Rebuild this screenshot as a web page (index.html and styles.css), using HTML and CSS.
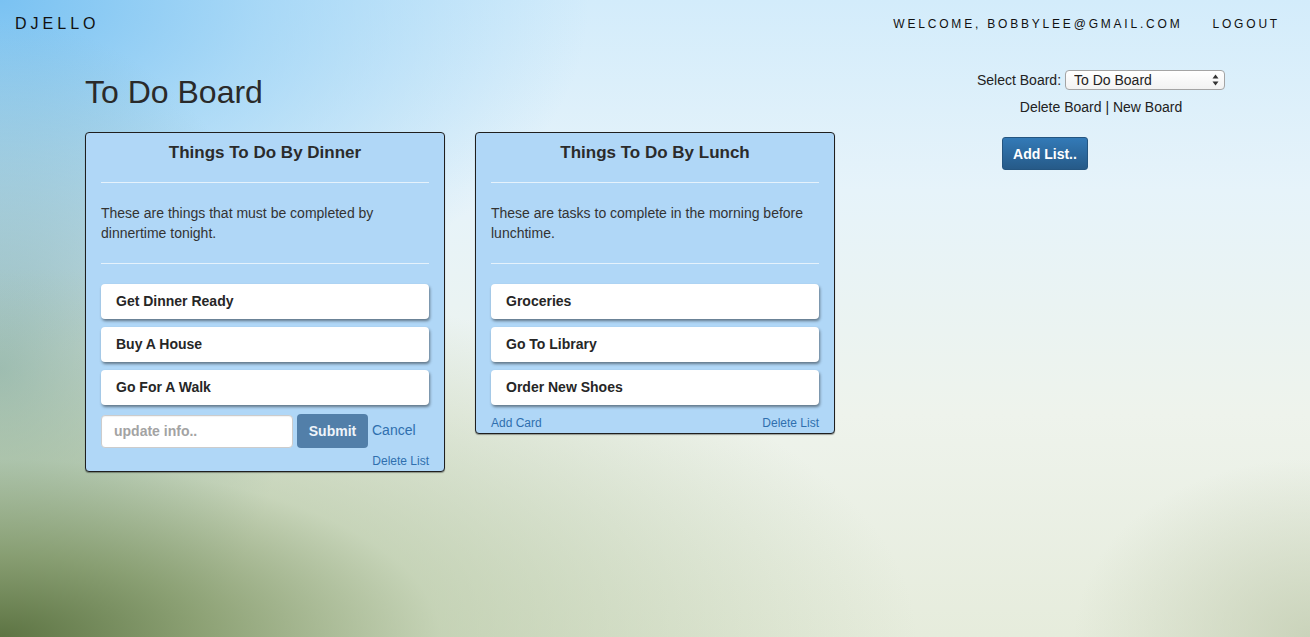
FILE: index.html
```html
<!DOCTYPE html>
<html lang="en">
<head>
<meta charset="utf-8">
<title>Djello</title>
<link rel="stylesheet" href="styles.css">
</head>
<body>
<nav class="topbar">
  <div class="brand">DJELLO</div>
  <ul class="navlinks">
    <li class="navlink">WELCOME, BOBBYLEE@GMAIL.COM</li>
    <li class="navlink">LOGOUT</li>
  </ul>
</nav>
<main class="page">
  <section class="board">
    <h1 class="board-title">To Do Board</h1>
    <div class="lists">
      <div class="list">
        <h3 class="list-title">Things To Do By Dinner</h3>
        <hr class="divider">
        <p class="list-desc">These are things that must be completed by dinnertime tonight.</p>
        <hr class="divider">
        <div class="cards">
          <div class="card">Get Dinner Ready</div>
          <div class="card">Buy A House</div>
          <div class="card">Go For A Walk</div>
        </div>
        <form class="card-form">
          <input class="card-input" type="text" placeholder="update info..">
          <button class="btn-submit" type="button">Submit</button>
          <a class="link cancel">Cancel</a>
        </form>
        <div class="list-footer end">
          <a class="link small">Delete List</a>
        </div>
      </div>
      <div class="list">
        <h3 class="list-title">Things To Do By Lunch</h3>
        <hr class="divider">
        <p class="list-desc">These are tasks to complete in the morning before lunchtime.</p>
        <hr class="divider">
        <div class="cards">
          <div class="card">Groceries</div>
          <div class="card">Go To Library</div>
          <div class="card">Order New Shoes</div>
        </div>
        <div class="list-footer between">
          <a class="link small">Add Card</a>
          <a class="link small">Delete List</a>
        </div>
      </div>
    </div>
  </section>
  <aside class="controls">
    <div class="select-row">
      <label class="select-label">Select Board:</label>
      <div class="select-wrap">
        <select class="board-select"><option>To Do Board</option></select>
        <svg class="select-arrows" width="7" height="12" viewBox="0 0 7 12"><path d="M3.5 0.5 L6.5 4.5 L0.5 4.5 Z" fill="#333"/><path d="M3.5 11.5 L6.5 7.5 L0.5 7.5 Z" fill="#333"/></svg>
      </div>
    </div>
    <div class="board-actions"><a class="plain">Delete Board</a> | <a class="plain">New Board</a></div>
    <button class="btn-primary" type="button">Add List..</button>
  </aside>
</main>
</body>
</html>
```

FILE: styles.css
```css
* { box-sizing: border-box; }
html, body { height: 100%; }
body {
  margin: 0;
  font-family: "Liberation Sans", Arial, Helvetica, sans-serif;
  font-size: 14px;
  line-height: 20px;
  color: #333;
  min-height: 637px;
  background:
    radial-gradient(ellipse 70% 58% at 0% 100%, rgba(93,116,67,1) 0%, rgba(125,148,98,0.85) 22%, rgba(170,190,150,0.55) 48%, rgba(215,225,205,0) 100%),
    radial-gradient(ellipse 22% 55% at 0% 58%, rgba(125,170,170,0.75) 0%, rgba(150,190,190,0) 100%),
    radial-gradient(ellipse 45% 55% at 0% 0%, rgba(122,194,242,1) 0%, rgba(150,208,245,0.7) 45%, rgba(190,225,248,0) 100%),
    radial-gradient(ellipse 18% 28% at 100% 100%, rgba(195,205,178,0.8) 0%, rgba(210,220,195,0) 100%),
    linear-gradient(to bottom, #d3ecfb 0%, #e6f3fa 30%, #eef3ec 65%, #e6ecdc 100%);
  overflow: hidden;
}

.topbar {
  height: 50px;
  display: flex;
  align-items: center;
  justify-content: space-between;
  padding: 0 15px 2px 15px;
}
.brand {
  font-size: 16px;
  letter-spacing: 4px;
  color: #111;
}
.navlinks {
  list-style: none;
  margin: 0;
  padding: 0;
  display: flex;
}
.navlink {
  font-size: 12px;
  letter-spacing: 2.8px;
  color: #111;
  padding: 0 15px 0 15px;
}
.navlink:last-child { padding-right: 15px; }

.page {
  display: flex;
  align-items: flex-start;
}
.board {
  padding-left: 85px;
  padding-top: 25px;
}
.board-title {
  margin: 0 0 22px 0;
  font-size: 32px;
  line-height: 35px;
  font-weight: normal;
  color: #2a2a2a;
}
.lists {
  display: flex;
  align-items: flex-start;
  gap: 30px;
}
.list {
  width: 360px;
  background: #b0d7f7;
  border: 1px solid #1f1f1f;
  border-radius: 4px;
  padding: 0 15px 1px;
  box-shadow: 0 1px 1px rgba(0,0,0,0.35);
}
.list-title {
  margin: 0;
  padding-top: 10px;
  font-size: 17px;
  line-height: 20px;
  font-weight: bold;
  text-align: center;
  color: #2b2b2b;
}
.divider {
  border: 0;
  border-top: 1px solid rgba(235,245,252,0.9);
  margin: 19px 0 20px;
}
.list-desc {
  margin: 0;
  padding-bottom: 1px;
}
.cards {
  display: flex;
  flex-direction: column;
  gap: 8px;
}
.card {
  height: 35px;
  line-height: 35px;
  padding: 0 15px;
  background: #fff;
  border-radius: 4px;
  font-weight: bold;
  color: #262626;
  box-shadow: 1px 2px 3px rgba(0,0,0,0.45);
}
.card-form {
  display: flex;
  align-items: center;
  margin: 9px 0 4px;
}
.card-input {
  width: 192px;
  height: 33px;
  border: 1px solid #ccc;
  border-radius: 4px;
  padding: 6px 12px;
  font-family: inherit;
  font-size: 14px;
  font-weight: bold;
  color: #555;
  background: #fff;
  box-shadow: inset 0 1px 1px rgba(0,0,0,0.05);
}
.card-input::placeholder { color: #a3a3a3; }
.btn-submit {
  margin-left: 4px;
  width: 71px;
  height: 34px;
  border: 0;
  border-radius: 4px;
  background: #527fa9;
  color: #eef4fa;
  font-family: inherit;
  font-size: 14px;
  font-weight: bold;
}
.link {
  color: #2f6fae;
  text-decoration: none;
}
.cancel {
  margin-left: 4px;
  font-size: 14px;
  margin-top: -3px;
}
.small { font-size: 12px; }
.list-footer {
  display: flex;
  line-height: 18px;
}
.list-footer.end { justify-content: flex-end; }
.list-footer.between {
  justify-content: space-between;
  margin-top: 8px;
  line-height: 20px;
}
.list:last-child { padding-bottom: 0; }

.controls {
  width: 300px;
  margin-left: 116px;
  padding-top: 20px;
  display: flex;
  flex-direction: column;
  align-items: center;
}
.select-row {
  display: flex;
  align-items: center;
  gap: 4px;
  height: 20px;
}
.select-label { color: #222; }
.select-wrap {
  position: relative;
  width: 160px;
  height: 20px;
}
.board-select {
  -webkit-appearance: none;
  appearance: none;
  width: 160px;
  height: 20px;
  border: 1px solid #a4a4a4;
  border-radius: 4px;
  background: linear-gradient(to bottom, #ffffff, #f2f2f2);
  font-family: inherit;
  font-size: 14px;
  color: #222;
  padding: 0 0 0 8px;
  line-height: 18px;
}
.select-arrows {
  position: absolute;
  right: 6px;
  top: 4px;
}
.board-actions {
  margin-top: 7px;
  color: #222;
}
.plain { color: #222; text-decoration: none; }
.btn-primary {
  align-self: flex-start;
  margin-left: 51px;
  margin-top: 20px;
  width: 86px;
  height: 33px;
  border: 1px solid #245580;
  border-radius: 3px;
  background: linear-gradient(to bottom, #337ab7 0%, #265a88 100%);
  color: #fff;
  font-family: inherit;
  font-size: 14px;
  font-weight: bold;
}
```
